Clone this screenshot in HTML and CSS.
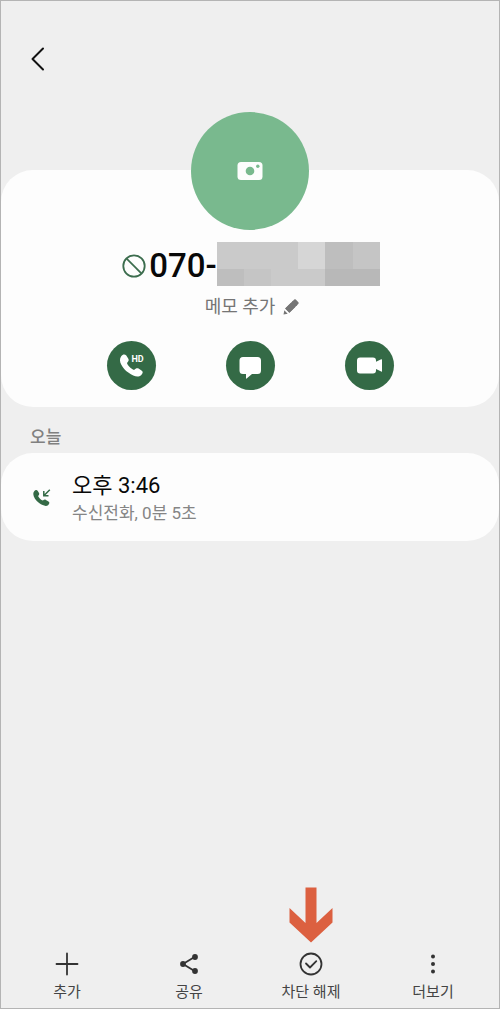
FILE: index.html
```html
<!DOCTYPE html>
<html lang="ko">
<head>
<meta charset="utf-8">
<meta name="viewport" content="width=device-width, initial-scale=1">
<title>070-</title>
<link rel="stylesheet" href="styles.css">
</head>
<body>
<div class="screen">
  <header class="topbar">
    <button class="back" type="button" aria-label="뒤로">
      <svg width="24" height="28" viewBox="0 0 24 28"><path d="M17 3.500 6.500 14 17 24.500" fill="none" stroke="#111" stroke-width="2" stroke-linecap="round" stroke-linejoin="round"/></svg>
    </button>
  </header>

  <main class="content">
    <section class="card profile">
      <button class="avatar" type="button" aria-label="사진 추가">
        <svg width="26" height="20" viewBox="0 0 26 20"><rect x="0.500" y="1" width="25" height="18" rx="3.500" fill="#fdfdfd"/><circle cx="13" cy="10" r="4.300" fill="#79b98e"/><circle cx="20.800" cy="5.300" r="1.700" fill="#79b98e"/></svg>
      </button>
      <h1 class="number">
        <svg class="blocked" width="24" height="24" viewBox="0 0 24 24" fill="none" stroke="#3c6d4e" stroke-width="1.800"><circle cx="12" cy="12" r="10.700"/><path d="M4.400 4.400 19.600 19.600"/></svg>
        <span>070-</span>
        <span class="mosaic">
          <i class="t2"></i><i class="t2"></i><i class="t2"></i><i class="t1"></i><i class="t4"></i><i class="t3"></i>
          <i class="t4"></i><i class="t3"></i><i class="t2"></i><i class="t2"></i><i class="t5"></i><i class="t5"></i>
        </span>
      </h1>
      <button class="memo" type="button">
        <span>메모 추가</span>
        <svg width="18" height="18" viewBox="0 0 18 18" fill="#757575"><path d="M1.500 16.500 2.300 12.300 5.700 15.700Z"/><path d="M3.200 10.600 9.300 4.500 13.500 8.700 7.400 14.800Z"/><path d="M10.100 3.700 12.200 1.600Q13 .9 13.800 1.600L16.400 4.200Q17.100 5 16.400 5.800L14.300 7.900Z"/><path d="M3.200 10.600 11 2.800 15.200 7 7.400 14.800Z"/></svg>
      </button>
      <div class="actions">
        <button class="action" type="button" aria-label="HD 전화">
          <svg width="49" height="49" viewBox="0 0 49 49"><path d="M14.200 15.200C15.900 12.900 18 12.900 19.300 14.600L21.200 17.600C22.300 19.400 21.500 20.500 20 21.900C20.500 24.300 24.200 27.800 27.100 28.900C28.600 27.500 30.200 26.900 31.900 27.800L34.500 29.500C36.400 30.800 36 32.300 34.100 34.200C31.500 36.700 27 35.900 21.300 31.600C15.500 27.200 10.600 20 14.200 15.200Z" fill="#fff"/><text class="hd" x="24.500" y="21">HD</text></svg>
        </button>
        <button class="action" type="button" aria-label="메시지">
          <svg width="49" height="49" viewBox="0 0 49 49" fill="#fff"><path d="M17 16H31.500Q35 16 35 19.500V29.500Q35 33 31.500 33H26L20.600 37.600Q20 38 20 37.200V33H17Q13.500 33 13.500 29.500V19.500Q13.500 16 17 16Z"/></svg>
        </button>
        <button class="action" type="button" aria-label="영상통화">
          <svg width="49" height="49" viewBox="0 0 49 49" fill="#fff"><path d="M15 16.500H28Q31 16.500 31 19.500V20.800L36.200 18.200Q37 18 37 18.800V30.200Q37 31 36.200 30.600L31 28V29.500Q31 32.500 28 32.500H15Q12 32.500 12 29.500V19.500Q12 16.500 15 16.500Z"/></svg>
        </button>
      </div>
    </section>

    <h2 class="day">오늘</h2>
    <section class="card call">
      <svg width="20" height="20" viewBox="0 0 20 20"><path d="M2.200 3.200C3.300 1.700 4.900 1.700 5.800 3L7 5C7.600 6.200 7 7 6.100 7.900C6.600 9.600 9.100 12 10.900 12.600C11.900 11.700 12.800 11.300 13.900 11.900L16.500 13.400C17.800 14.300 17.600 15.600 16.300 17C14.500 18.600 11 18.100 7.100 15.100C2.700 11.700-.3 6.600 2.200 3.200Z" fill="#346a46"/><path d="M17.800 1.700 11.800 7.700M11.800 3V7.700H16.500" fill="none" stroke="#346a46" stroke-width="1.500"/></svg>
      <div class="call-text">
        <p class="time">오후 3:46</p>
        <p class="detail">수신전화, 0분 5초</p>
      </div>
    </section>
  </main>

  <nav class="toolbar">
    <button class="tool" type="button">
      <svg width="24" height="24" viewBox="0 0 24 24" fill="none" stroke="#333" stroke-width="1.800" stroke-linecap="round"><path d="M12 1.500V22.500M1.500 12H22.500"/></svg>
      <span>추가</span>
    </button>
    <button class="tool" type="button">
      <svg width="24" height="24" viewBox="0 0 24 24"><path d="M17.500 5 6 12 17.500 19" fill="none" stroke="#333" stroke-width="1.800"/><g fill="#333"><circle cx="18" cy="5" r="2.900"/><circle cx="6" cy="12" r="2.900"/><circle cx="18" cy="19" r="2.900"/></g></svg>
      <span>공유</span>
    </button>
    <button class="tool" type="button">
      <svg class="pointer" width="44" height="56" viewBox="0 0 44 56" fill="#dc6040"><path d="M16.500 0.500H27.500V36L43.500 21V35.500L22 55.500 0.500 35.500V21L16.500 36Z"/></svg>
      <svg width="24" height="24" viewBox="0 0 24 24" fill="none" stroke="#333" stroke-width="1.800" stroke-linecap="round" stroke-linejoin="round"><circle cx="12" cy="12" r="10.500"/><path d="M7 11.500 11 15.500 17.300 9.200"/></svg>
      <span>차단 해제</span>
    </button>
    <button class="tool" type="button">
      <svg width="24" height="24" viewBox="0 0 24 24" fill="#333"><circle cx="12" cy="4.500" r="2"/><circle cx="12" cy="12" r="2"/><circle cx="12" cy="19.500" r="2"/></svg>
      <span>더보기</span>
    </button>
  </nav>
</div>
</body>
</html>
```

FILE: styles.css
```css
* {
  box-sizing: border-box;
}

body {
  margin: 0;
  background: #efefef;
  color: #080808;
  font-family: Roboto, "Noto Sans CJK KR", sans-serif;
}

button {
  padding: 0;
  border: 0;
  background: none;
  color: inherit;
  font: inherit;
  cursor: pointer;
}

svg {
  display: block;
  flex: none;
}

h1,
h2,
p {
  margin: 0;
  font-weight: 400;
}

.screen {
  display: flex;
  flex-direction: column;
  min-height: 100vh;
  border: 1px solid #b4b4b4;
}

.topbar {
  display: flex;
  padding: 44px 25px 0;
}

.content {
  flex: 1;
  padding-top: 97px;
}

.card {
  border-radius: 32px;
  background: #fdfdfd;
}

.profile {
  display: flex;
  flex-direction: column;
  align-items: center;
  padding-bottom: 17px;
}

.avatar {
  display: grid;
  place-items: center;
  width: 118px;
  height: 118px;
  margin-top: -58px;
  border-radius: 50%;
  background: #79b98e;
}

.number {
  display: flex;
  align-items: center;
  margin-top: 12px;
  padding-left: 2px;
  font-size: 33px;
  font-weight: 500;
  line-height: 48px;
}

.blocked {
  margin-right: 3px;
}

.mosaic {
  display: grid;
  align-self: flex-start;
  grid-template-columns: repeat(6, 1fr);
  grid-template-rows: 27px 17px;
  width: 163px;
}

.t1 { background: #d6d6d6; }
.t2 { background: #cacaca; }
.t3 { background: #c5c5c5; }
.t4 { background: #bebebe; }
.t5 { background: #b8b8b8; }

.memo {
  display: flex;
  align-items: center;
  gap: 7px;
  margin-top: 5px;
  padding-left: 5px;
  color: #757575;
  font-size: 18px;
  line-height: 24px;
}

.actions {
  display: flex;
  gap: 70px;
  margin-top: 22px;
}

.action {
  width: 49px;
  height: 49px;
  border-radius: 50%;
  background: #346a46;
}

.hd {
  fill: #fff;
  font-size: 9px;
  font-weight: 700;
}

.day {
  padding: 18px 29px 4px;
  color: #808080;
  font-size: 17px;
  font-weight: 500;
  line-height: 24px;
}

.call {
  display: flex;
  align-items: center;
  gap: 20px;
  padding: 18px 31px 16px;
}

.time {
  font-size: 22px;
  line-height: 30px;
}

.detail {
  color: #858585;
  font-size: 17px;
  line-height: 24px;
}

.toolbar {
  display: grid;
  grid-template-columns: repeat(4, 1fr);
  padding: 0 5px 5px;
}

.tool {
  position: relative;
  display: flex;
  flex-direction: column;
  align-items: center;
  gap: 5px;
  color: #444;
  font-size: 15px;
  line-height: 22px;
}

.pointer {
  position: absolute;
  bottom: 100%;
  margin-bottom: 9px;
}
```
